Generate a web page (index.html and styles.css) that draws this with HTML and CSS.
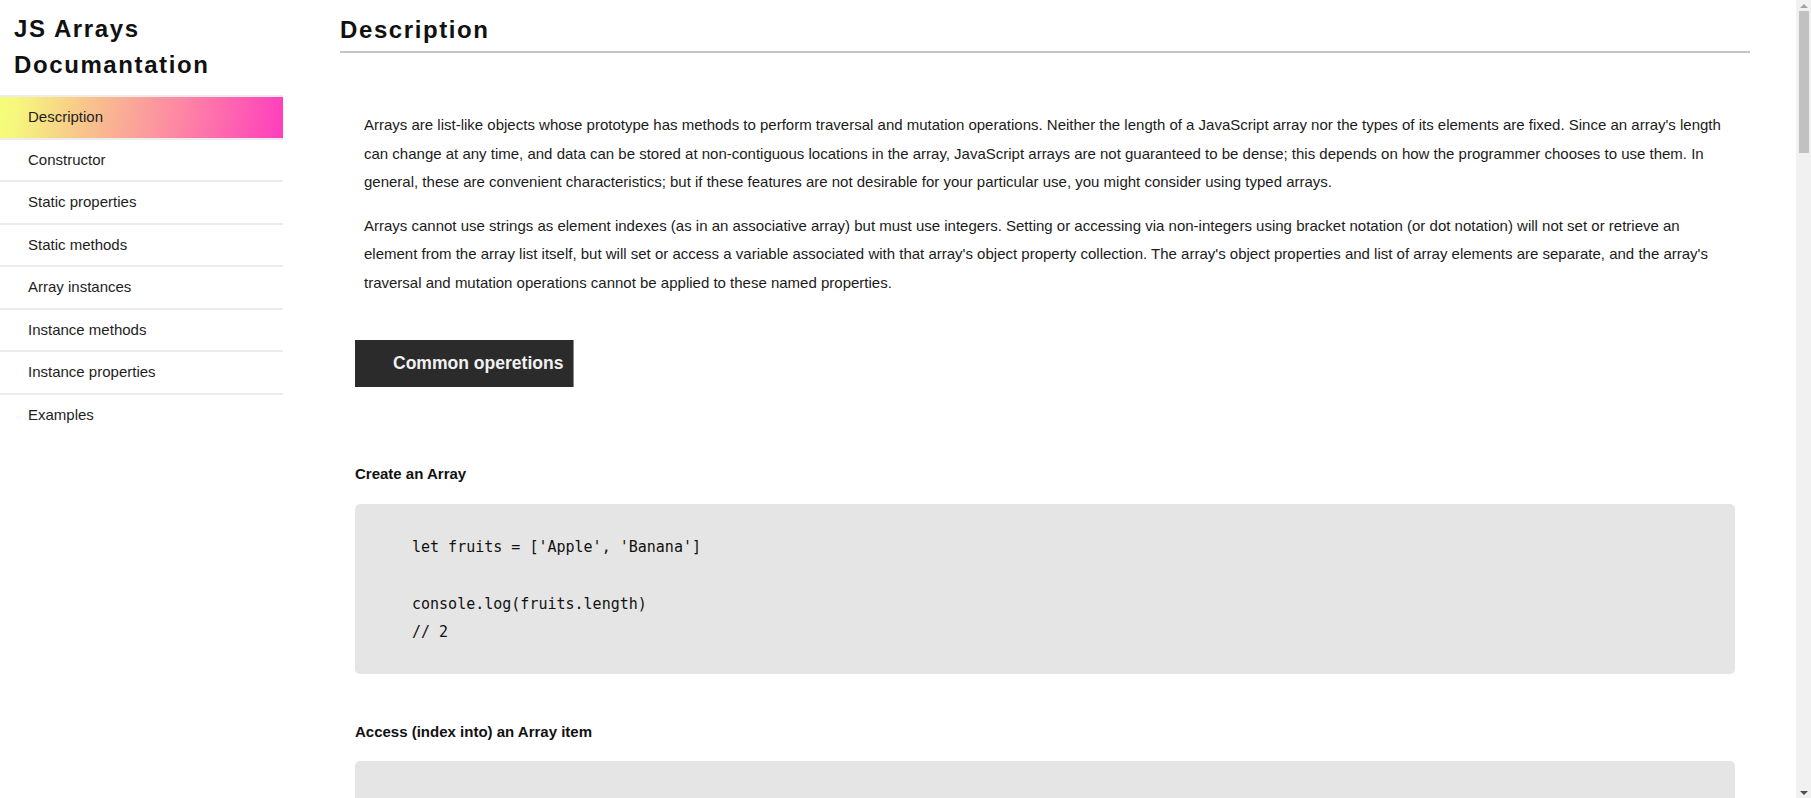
FILE: index.html
```html
<!DOCTYPE html>
<html lang="en">
<head>
<meta charset="utf-8">
<title>JS Arrays Documantation</title>
<link rel="stylesheet" href="styles.css">
</head>
<body>
<div class="page">
  <nav class="sidebar" id="navbar">
    <header class="brand">JS Arrays Documantation</header>
    <ul class="nav-list">
      <li><a class="nav-link active" href="#Description">Description</a></li>
      <li><a class="nav-link" href="#Constructor">Constructor</a></li>
      <li><a class="nav-link" href="#Static_properties">Static properties</a></li>
      <li><a class="nav-link" href="#Static_methods">Static methods</a></li>
      <li><a class="nav-link" href="#Array_instances">Array instances</a></li>
      <li><a class="nav-link" href="#Instance_methods">Instance methods</a></li>
      <li><a class="nav-link" href="#Instance_properties">Instance properties</a></li>
      <li><a class="nav-link" href="#Examples">Examples</a></li>
    </ul>
  </nav>

  <main class="main" id="main-doc">
    <section class="main-section" id="Description">
      <header class="section-title">Description</header>
      <div class="section-body">
        <div class="intro">
          <p>Arrays are list-like objects whose prototype has methods to perform traversal and mutation operations. Neither the length of a JavaScript array nor the types of its elements are fixed. Since an array's length can change at any time, and data can be stored at non-contiguous locations in the array, JavaScript arrays are not guaranteed to be dense; this depends on how the programmer chooses to use them. In general, these are convenient characteristics; but if these features are not desirable for your particular use, you might consider using typed arrays.</p>
          <p>Arrays cannot use strings as element indexes (as in an associative array) but must use integers. Setting or accessing via non-integers using bracket notation (or dot notation) will not set or retrieve an element from the array list itself, but will set or access a variable associated with that array's object property collection. The array's object properties and list of array elements are separate, and the array's traversal and mutation operations cannot be applied to these named properties.</p>
        </div>

        <h3 class="ops-title">Common operetions</h3>

        <div class="example">
          <h4 class="example-title">Create an Array</h4>
          <pre class="code"><code>let fruits = ['Apple', 'Banana']

console.log(fruits.length)
// 2</code></pre>
        </div>

        <div class="example">
          <h4 class="example-title">Access (index into) an Array item</h4>
          <pre class="code"><code>
let first = fruits[0]
// Apple

let last = fruits[fruits.length - 1]
// Banana</code></pre>
        </div>

        <div class="example">
          <h4 class="example-title">Loop over an Array</h4>
          <pre class="code"><code>fruits.forEach(function(item, index, array) {
  console.log(item, index)
})
// Apple 0
// Banana 1</code></pre>
        </div>

        <div class="example">
          <h4 class="example-title">Add an item to the end of an Array</h4>
          <pre class="code"><code>let newLength = fruits.push('Orange')
// ["Apple", "Banana", "Orange"]</code></pre>
        </div>

        <div class="example">
          <h4 class="example-title">Remove an item from the end of an Array</h4>
          <pre class="code"><code>let last = fruits.pop() // remove Orange (from the end)
// ["Apple", "Banana"]</code></pre>
        </div>

        <div class="example">
          <h4 class="example-title">Copy an Array</h4>
          <pre class="code"><code>let shallowCopy = fruits.slice() // this is how to make a copy
// ["Apple", "Banana"]</code></pre>
        </div>
      </div>
    </section>
  </main>
</div>

<div class="scrollbar" aria-hidden="true">
  <div class="sb-arrow sb-up"></div>
  <div class="sb-track"><div class="sb-thumb"></div></div>
  <div class="sb-arrow sb-down"></div>
</div>
</body>
</html>
```

FILE: styles.css
```css
html, body {
  margin: 0;
  padding: 0;
  height: 100%;
  overflow: hidden;
}

body {
  display: flex;
  font-family: "Liberation Sans", Arial, sans-serif;
  font-size: 15px;
  line-height: 28.5px;
  color: #1b1b1b;
  background: #ffffff;
}

.page {
  flex: 1 1 auto;
  min-width: 0;
  display: flex;
  align-items: flex-start;
  height: 100vh;
  overflow-y: auto;
}

/* ---------- fake classic scrollbar ---------- */
.scrollbar {
  flex: 0 0 15px;
  height: 100vh;
  display: flex;
  flex-direction: column;
  background: #f1f1f1;
}

.sb-arrow {
  flex: 0 0 11px;
  display: flex;
  justify-content: center;
  align-items: center;
}

.sb-arrow::before {
  content: "";
  width: 0;
  height: 0;
  border-left: 4px solid transparent;
  border-right: 4px solid transparent;
}

.sb-up::before {
  border-bottom: 4px solid #a3a3a3;
}

.sb-down::before {
  border-top: 4px solid #505050;
}

.sb-track {
  flex: 1 1 auto;
  padding: 0 2px 0 3px;
}

.sb-thumb {
  height: 142px;
  background: #c1c1c1;
}

/* ---------- sidebar ---------- */
.sidebar {
  flex: 0 0 283px;
  width: 283px;
}

.brand {
  padding: 11px 0 0 14px;
  margin-bottom: 12px;
  font-size: 24px;
  font-weight: bold;
  letter-spacing: 1.6px;
  line-height: 36px;
  color: #111;
}

.nav-list {
  list-style: none;
  margin: 0;
  padding: 0;
}

.nav-list li {
  border-top: 2px solid #ececec;
}

.nav-link {
  display: block;
  padding: 6px 0 6px 28px;
  line-height: 28.5px;
  color: #1e1e1e;
  text-decoration: none;
}

.nav-link.active {
  background: linear-gradient(100deg, #f4fc79 0%, #f6f87c 6%, #f8c58b 30%, #fd83a6 65%, #ff3dbd 100%);
}

/* ---------- main ---------- */
.main {
  flex: 1 1 auto;
  min-width: 0;
  padding: 12px 46px 160px 57px;
}

.section-title {
  font-size: 24px;
  font-weight: bold;
  letter-spacing: 1.6px;
  line-height: 36px;
  color: #111;
  padding-bottom: 3px;
  border-bottom: 2px solid #c4c4c4;
}

.section-body {
  margin: 0 15px;
}

.intro {
  padding-top: 58px;
}

.intro p {
  margin: 0 0 15px;
  padding-left: 9px;
}

.ops-title {
  display: inline-block;
  margin: 28px 0 29px;
  height: 47px;
  padding: 0 10px 0 38px;
  font-size: 17.55px;
  line-height: 47px;
  font-weight: bold;
  color: #f1f1f1;
  background: #2b2b2b;
  border-right: 1px solid #8a8a8a;
}

.example {
  margin-top: 44px;
}

.example-title {
  margin: 0 0 15px;
  font-size: 15px;
  line-height: 28.5px;
  font-weight: bold;
  color: #111;
}

.code {
  margin: 0;
  padding: 29px 20px 27px 57px;
  background: #e5e5e5;
  border-radius: 5px;
  font-family: "DejaVu Sans Mono", monospace;
  font-size: 15px;
  line-height: 28.5px;
  color: #111;
  white-space: pre-wrap;
}

.code code {
  font-family: inherit;
  font-size: inherit;
}
```
